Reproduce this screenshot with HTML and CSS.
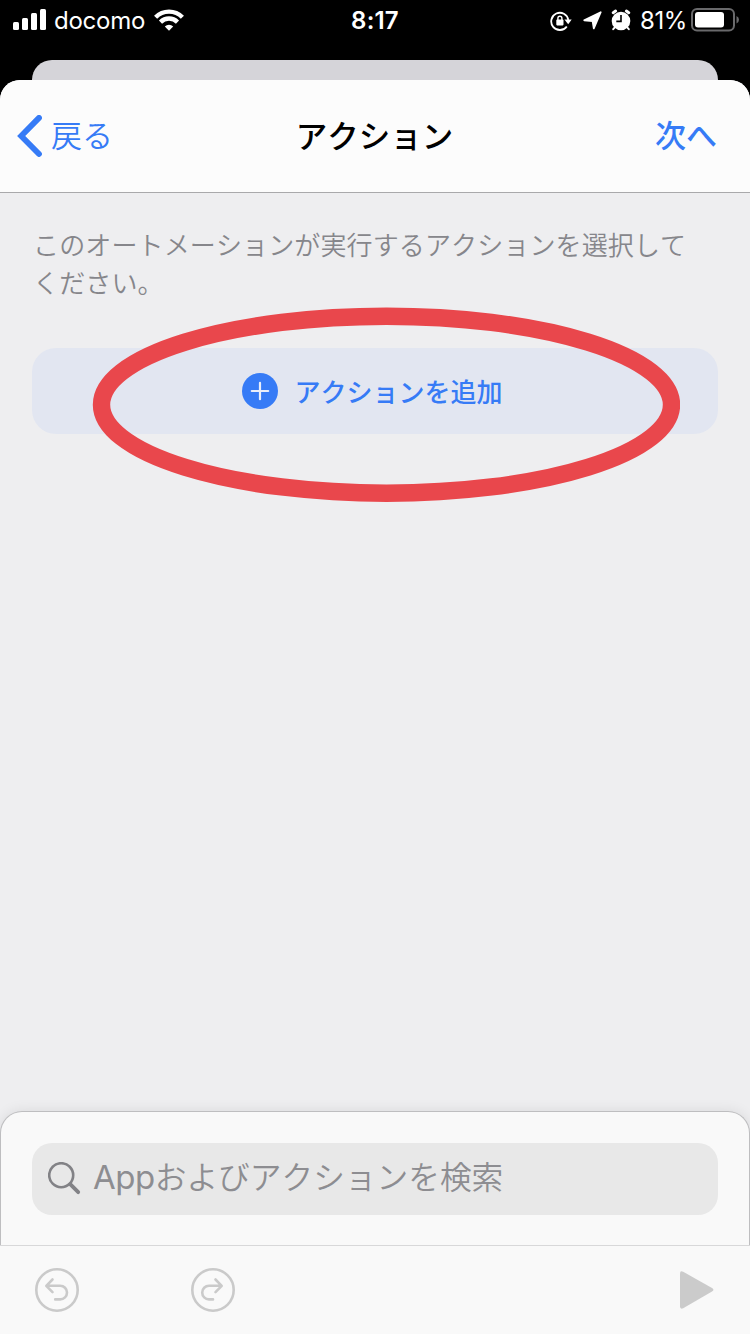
FILE: index.html
```
<!DOCTYPE html>
<html lang="ja">
<head>
<meta charset="utf-8">
<title>アクション</title>
<link rel="stylesheet" href="styles.css">
</head>
<body>
<div class="screen">
  <header class="status">
    <div class="status-left">
      <svg class="signal" width="34" height="22" viewBox="0 0 34 22" fill="#fff"><rect x="0" y="13" width="6" height="8" rx="1.5"/><rect x="9" y="9" width="6" height="12" rx="1.5"/><rect x="18" y="4" width="6" height="17" rx="1.5"/><rect x="27" y="0" width="6" height="21" rx="1.5"/></svg>
      <span class="carrier">docomo</span>
      <svg class="wifi" width="30" height="22" viewBox="0 0 30 22" fill="none" stroke="#fff" stroke-width="4.4"><path d="M1.6 8.2a19 19 0 0 1 26.8 0"/><path d="M6.5 13.1a12 12 0 0 1 17 0"/><path d="M15 21.8l-4.2-4.3a6 6 0 0 1 8.4 0z" fill="#fff" stroke="none"/></svg>
    </div>
    <span class="clock">8:17</span>
    <div class="status-right">
      <svg class="lock" width="22" height="20" viewBox="0 0 22 20" fill="none" stroke="#fff" stroke-width="1.8"><path d="M16.8 15.4A8.6 8.6 0 1 1 18.3 9"/><path d="M14.4 8.4h7.3l-3.5 4.8z" fill="#fff" stroke="none"/><rect x="6.3" y="8.6" width="7.2" height="5.8" rx=".8" fill="#fff" stroke="none"/><path d="M7.9 9.3V7.2a2 2 0 0 1 4 0v2.1" stroke-width="1.4"/></svg>
      <svg class="locate" width="19" height="19" viewBox="0 0 19 19" fill="#fff" stroke="#fff" stroke-width="1.8" stroke-linejoin="round"><path d="M1.2 9.3 17.7 1.2 10.8 17.4 9.6 10z"/></svg>
      <svg class="alarm" width="20" height="22" viewBox="0 0 20 22"><circle cx="10" cy="12" r="9.3" fill="#fff"/><g stroke="#fff" stroke-width="3" stroke-linecap="round"><path d="M2.2 3.7 4.6 2.1M17.8 3.7l-2.4-1.6"/><path stroke-width="2" d="M3.6 18.6l-1.4 1.6M16.4 18.6l1.4 1.6"/></g><path d="M10 6v6.4H5.3" fill="none" stroke="#000" stroke-width="1.6"/></svg>
      <span class="percent">81%</span>
      <svg class="battery" width="49" height="24" viewBox="0 0 49 24"><rect x="1" y="1" width="42" height="21.5" rx="5" fill="none" stroke="#69696b" stroke-width="2"/><rect x="4" y="4" width="29" height="15.5" rx="3" fill="#fff"/><path d="M45.5 8q2.5 1 2.5 3.7t-2.5 3.7z" fill="#69696b"/></svg>
    </div>
  </header>
  <div class="peek"></div>
  <main class="sheet">
    <nav class="nav">
      <div class="back"><svg width="26" height="42" viewBox="0 0 26 42" fill="none" stroke="#367bf6" stroke-width="5.8" stroke-linecap="round" stroke-linejoin="miter"><path d="M22 2.9 4.2 21 22 39"/></svg><span>戻る</span></div>
      <h1 class="title">アクション</h1>
      <span class="next">次へ</span>
    </nav>
    <section class="content">
      <p class="lead">このオートメーションが実行するアクションを選択して<br>ください。</p>
      <div class="add">
        <svg width="36" height="36" viewBox="0 0 36 36"><circle cx="18" cy="18" r="18" fill="#367bf6"/><path d="M9.8 18h16.4M18 9.8v16.4" stroke="#e9eefa" stroke-width="2.2" stroke-linecap="round"/></svg>
        <span>アクションを追加</span>
        <svg class="highlight" width="588" height="196" viewBox="0 0 588 196"><ellipse cx="294.5" cy="97.7" rx="285" ry="88.5" fill="none" stroke="#e9474c" stroke-width="17.4"/></svg>
      </div>
    </section>
    <section class="drawer">
      <div class="search"><svg width="33" height="33" viewBox="0 0 33 33" fill="none" stroke="#828286" stroke-linecap="round"><circle cx="13.2" cy="13.2" r="12" stroke-width="2.6"/><path d="M22.2 22.2 30.2 30.2" stroke-width="3.8"/></svg><span class="placeholder"><span class="latin">App</span>およびアクションを検索</span></div>
    </section>
    <footer class="toolbar">
      <svg width="44" height="44" viewBox="0 0 44 44" fill="none" stroke="#cacaca" stroke-width="2.6" stroke-linecap="round" stroke-linejoin="round"><circle cx="22" cy="22" r="20.7"/><path d="M17.5 11.5 11.3 17.8l6.2 6.3M11.5 17.8h13.7a6.8 6.8 0 0 1 0 13.6h-5"/></svg>
      <svg class="redo" width="44" height="44" viewBox="0 0 44 44" fill="none" stroke="#cacaca" stroke-width="2.6" stroke-linecap="round" stroke-linejoin="round"><circle cx="22" cy="22" r="20.7"/><path d="M24.5 11.5 30.7 17.8l-6.2 6.3M30.5 17.8H18a6.8 6.8 0 0 0 0 13.6h4"/></svg>
      <svg class="play" width="34" height="38" viewBox="0 0 34 38" fill="#cbcbcb"><path d="M0 2.5Q0-.8 3.2.8L32 17.1q2.8 1.7 0 3.5L3.2 37.3Q0 38.5 0 35.5z"/></svg>
    </footer>
  </main>
</div>
</body>
</html>
```
FILE: styles.css
```
* { box-sizing: border-box; }
body { margin: 0; background: #000; font-family: "Noto Sans CJK JP", sans-serif; font-kerning: none; }
svg { display: block; flex: none; }
.screen { width: 750px; height: 1334px; display: flex; flex-direction: column; overflow: hidden; background: #000; }

.status { height: 60px; flex: none; display: grid; grid-template-columns: 1fr auto 1fr; align-items: start; padding: 0 11px 0 13px; color: #fff; font-family: Inter, sans-serif; font-size: 24px; line-height: 42px; }
.status-left, .status-right { display: flex; height: 40px; align-items: center; }
.status-right { justify-content: flex-end; }
.carrier { margin-left: 7px; padding-top: 2px; letter-spacing: -.25px; }
.wifi { margin-left: 9px; }
.clock { margin-right: 2px; font-weight: 600; letter-spacing: .2px; }
.lock { margin-top: 1px; }
.locate { margin: 1px 0 0 11px; }
.alarm { margin: -1px 0 0 9px; }
.percent { margin-left: 9px; padding-top: 2px; letter-spacing: -.4px; }
.battery { margin-left: 4px; margin-right: -1px; }

.peek { height: 20px; flex: none; margin: 0 32px; border-radius: 20px 20px 0 0; background: #d5d4d9; }
.sheet { flex: 1; display: flex; flex-direction: column; border-radius: 20px 20px 0 0; background: #eeeef0; overflow: hidden; }

.nav { height: 113px; flex: none; display: grid; grid-template-columns: 1fr auto 1fr; align-items: center; padding: 0 33px 0 17px; background: #fcfcfc; border-bottom: 1px solid #a9a9ab; line-height: 44px; font-size: 31px; }
.nav span, .title { padding-bottom: 4px; }
.back { display: flex; align-items: center; gap: 8px; color: #367bf6; font-weight: 350; }
.title { margin: 0 0 0 15px; font-size: 31.5px; font-weight: 500; }
.next { justify-self: end; color: #367bf6; font-weight: 500; }

.content { flex: 1; padding: 32px 32px 0; }
.lead { margin: 0; padding-left: 1px; font-size: 26px; line-height: 38px; letter-spacing: .13px; font-weight: 350; color: #86868b; white-space: nowrap; }
.add { position: relative; height: 86px; margin-top: 47px; display: flex; align-items: center; justify-content: center; gap: 16px; padding-right: 5px; border-radius: 24px; background: #e2e6f1; color: #367bf6; font-size: 26px; font-weight: 500; line-height: 38px; }
.highlight { position: absolute; left: 60px; top: -41px; }

.drawer { height: 134px; flex: none; padding: 31px 31px 0; background: #f9f9f9; border: 1px solid #bebec0; border-bottom: 0; border-radius: 22px 22px 0 0; box-shadow: 0 0 14px rgba(0,0,0,.09); }
.search { height: 72px; display: flex; align-items: center; padding-left: 16px; border-radius: 20px; background: #e8e8e8; color: #8d8d91; font-size: 31.7px; font-weight: 350; line-height: 46px; }
.search svg { margin-top: -2px; }
.placeholder { margin-left: 12px; padding-bottom: 6px; }
.latin { font-family: Inter, sans-serif; font-size: 33px; font-weight: 400; letter-spacing: -.5px; }
.toolbar { position: relative; height: 89px; flex: none; display: flex; align-items: center; padding: 0 36px 0 35px; background: #f9f9f9; border-top: 1px solid #d8d8d9; }
.redo { margin-left: 112px; }
.play { margin: -1px 0 0 auto; }
```
